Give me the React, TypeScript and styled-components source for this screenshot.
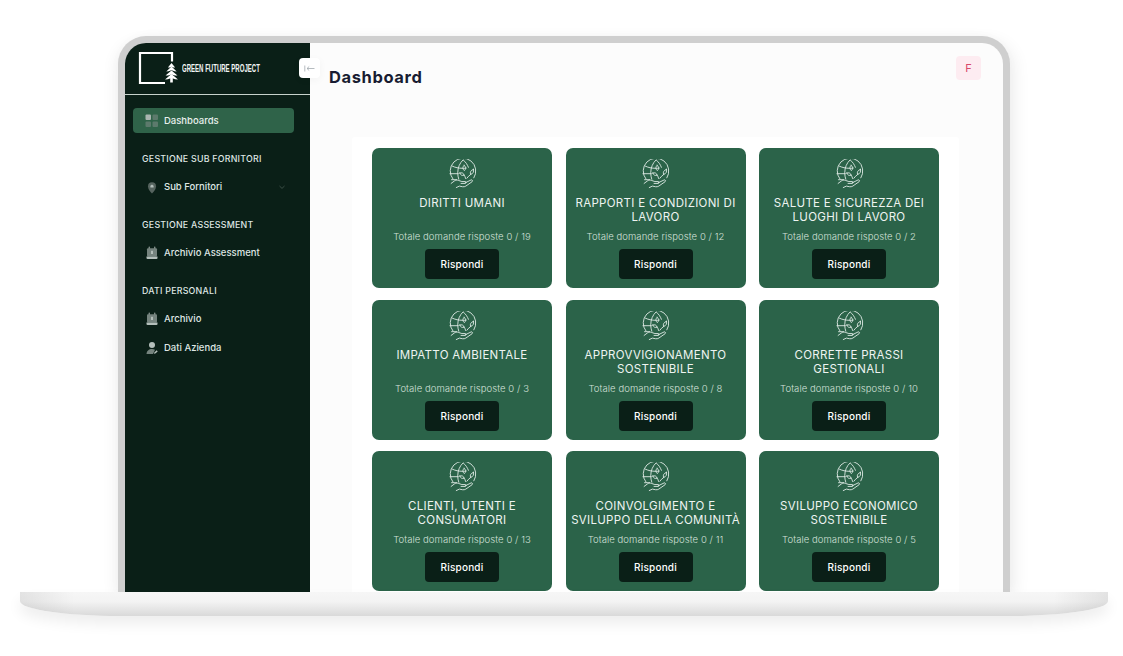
import React from 'react'
import styled, { createGlobalStyle } from 'styled-components'

const GlobalStyle = createGlobalStyle`
  html, body {
    margin: 0;
    padding: 0;
    background: #fff;
    font-family: Inter, "Open Sans", "Liberation Sans", sans-serif;
  }
  * { box-sizing: border-box; }
`

const topics = [
  { title: 'DIRITTI UMANI', total: 19 },
  { title: 'RAPPORTI E CONDIZIONI DI LAVORO', total: 12 },
  { title: 'SALUTE E SICUREZZA DEI LUOGHI DI LAVORO', total: 2 },
  { title: 'IMPATTO AMBIENTALE', total: 3 },
  { title: 'APPROVVIGIONAMENTO SOSTENIBILE', total: 8 },
  { title: 'CORRETTE PRASSI GESTIONALI', total: 10 },
  { title: 'CLIENTI, UTENTI E CONSUMATORI', total: 13 },
  { title: 'COINVOLGIMENTO E SVILUPPO DELLA COMUNITÀ', total: 11 },
  { title: 'SVILUPPO ECONOMICO SOSTENIBILE', total: 5 },
]

const Logo = () => (
  <svg width="42" height="34" viewBox="0 0 42 34" fill="none">
    <path d="M27 32H2V2h32v8.500" stroke="#fff" strokeWidth="2.200" />
    <g fill="#fff">
      <path d="M33.500 12l3.600 4.600-1.500-.2-2.100-.6-2.100.6-1.500.2z" />
      <path d="M33.500 15.400l5.200 5-2-.1-3.200-1-3.200 1-2 .1z" />
      <path d="M33.500 19.400l6 5.200-2.400-.1-3.600-1.100-3.600 1.100-2.400.1z" />
      <path d="M33.500 23l6.500 5.400-2.800-.1-3.700-1.200-3.700 1.200-2.800.1z" />
      <rect x="32.200" y="25" width="2.600" height="6.500" />
    </g>
  </svg>
)

const GridIcon = () => (
  <svg width="14" height="14" viewBox="0 0 14 14">
    <rect x="0.500" y="0.500" width="5.500" height="5.500" rx="1" fill="#a8b5b0" />
    <rect x="7.500" y="0.500" width="5.500" height="5.500" rx="1" fill="#5c7a6c" />
    <rect x="0.500" y="7.500" width="5.500" height="5.500" rx="1" fill="#5c7a6c" />
    <rect x="7.500" y="7.500" width="5.500" height="5.500" rx="1" fill="#5c7a6c" />
  </svg>
)

const PinIcon = () => (
  <svg width="14" height="14" viewBox="0 0 14 14">
    <path d="M7 13.500C4.600 11.200 3 9 3 6.200a4 4 0 018 0c0 2.800-1.600 5-4 7.300z" fill="#56645f" />
    <path d="M5.400 7.400V5.800L7 4.600l1.600 1.200v1.600z" fill="#b4bfbb" />
  </svg>
)

const ArchiveIcon = () => (
  <svg width="14" height="14" viewBox="0 0 14 14">
    <rect x="3.600" y="0.500" width="1.300" height="3" rx="0.500" fill="#8b9894" />
    <rect x="9.100" y="0.500" width="1.300" height="3" rx="0.500" fill="#8b9894" />
    <rect x="2" y="2.200" width="10" height="8.200" rx="1" fill="#75837e" />
    <rect x="6.200" y="4.800" width="1.600" height="3.200" fill="#c2ccc8" />
    <path d="M1.500 10.400h11v1.600a1 1 0 01-1 1h-9a1 1 0 01-1-1z" fill="#b4bfbb" />
  </svg>
)

const UserIcon = () => (
  <svg width="14" height="14" viewBox="0 0 14 14">
    <circle cx="7" cy="4" r="3" fill="#b4bfbb" />
    <path d="M1.500 13c0-3 2.400-5 5.500-5 1.100 0 2.100.2 3 .7L8 13z" fill="#75837e" />
    <path d="M9 12.800l.3-1.400 2.400-2.100 1 1.100-2.400 2.100z" fill="#b4bfbb" />
  </svg>
)

const Chevron = () => (
  <svg width="8" height="8" viewBox="0 0 8 8" fill="none">
    <path d="M1.500 3l2.500 2.400L6.500 3" stroke="#41544c" strokeWidth="0.900" />
  </svg>
)

const BackArrow = () => (
  <svg width="11" height="9" viewBox="0 0 11 9" fill="none" stroke="#a3abb0" strokeWidth="0.800">
    <path d="M0.800 1.500v6" />
    <path d="M10.500 4.500H3M5.200 2.500L3 4.500l2.200 2" />
  </svg>
)

const GlobeHand = () => (
  <svg width="29" height="30" viewBox="0 0 28 29" fill="none" stroke="#e3ede8" strokeWidth="0.850" strokeLinecap="round" strokeLinejoin="round">
    <path d="M4.800 19.400A12.400 12.400 0 1 1 25 18.200" />
    <path d="M14.400 1c-3 2.800-5 7.200-5 12.400 0 2.200.4 4.300 1 6.200" />
    <path d="M14.800 1c2.200 1.900 3.900 4.300 4.900 7" />
    <path d="M4 6.800c2.800 1.500 6.400 2.200 10.400 2.200 1.200 0 2.200 0 3.200-.2" />
    <path d="M1.900 14.200h8" />
    <path d="M3.400 20h5" />
    <path d="M15.600 6.200c1.800 1.400 2 3.200.2 5-1.800-1.600-2-3.400-.2-5z" />
    <path d="M11.400 13.600c2-.8 3.600 0 4.200 2-2 .8-3.600 0-4.200-2z" />
    <path d="M24.600 10c.6 2.400-.4 4.200-2.800 5-.8-2.400.4-4.200 2.800-5z" />
    <path d="M15.600 15.600c.8 1.200 1.200 2 1.400 3.200M21.800 15c-1.400 1-2.600 2.200-3.600 3.600" />
    <path d="M3 23.600l3.200-2.400c1.400-1 2.800-1 4.200-.4l3 1h3.200c1.200 0 1.200 1.800 0 1.800h-4" />
    <path d="M16.600 23l5.800-2.800c1.200-.4 1.800 1 .8 1.800l-6 4.200c-1 .6-2 .8-3.200.6l-3-.6-3 1.400" />
  </svg>
)

const App: React.FC = () => {
  return (
    <Page>
      <GlobalStyle />
      <Lid>
        <Screen>
          <Sidebar>
            <Brand>
              <Logo />
              <BrandName>GREEN FUTURE PROJECT</BrandName>
            </Brand>
            <Nav>
              <ActiveItem>
                <GridIcon />
                <span>Dashboards</span>
              </ActiveItem>
              <SectionLabel>GESTIONE SUB FORNITORI</SectionLabel>
              <NavItem>
                <PinIcon />
                <span>Sub Fornitori</span>
                <ChevronSlot><Chevron /></ChevronSlot>
              </NavItem>
              <SectionLabel>GESTIONE ASSESSMENT</SectionLabel>
              <NavItem>
                <ArchiveIcon />
                <span>Archivio Assessment</span>
              </NavItem>
              <SectionLabel>DATI PERSONALI</SectionLabel>
              <NavItem>
                <ArchiveIcon />
                <span>Archivio</span>
              </NavItem>
              <NavItem>
                <UserIcon />
                <span>Dati Azienda</span>
              </NavItem>
            </Nav>
            <Toggle><BackArrow /></Toggle>
          </Sidebar>
          <Main>
            <Header>
              <Title>Dashboard</Title>
              <Avatar>F</Avatar>
            </Header>
            <Panel>
              <CardGrid>
                {topics.map((t) => (
                  <Card key={t.title}>
                    <GlobeHand />
                    <CardTitle>{t.title}</CardTitle>
                    <CardTotal>Totale domande risposte 0 / {t.total}</CardTotal>
                    <AnswerButton>Rispondi</AnswerButton>
                  </Card>
                ))}
              </CardGrid>
            </Panel>
          </Main>
        </Screen>
      </Lid>
      <Base />
    </Page>
  )
}

export default App

const Page = styled.div`
  width: 1123px;
  height: 656px;
  overflow: hidden;
  display: flex;
  flex-direction: column;
  align-items: center;
  padding-top: 36px;
`
const Lid = styled.div`
  width: 892px;
  height: 556px;
  margin-left: 5px;
  padding: 7px 7px 0;
  flex: none;
  background: #cfcfcf;
  border-radius: 28px 28px 0 0;
  box-shadow: 6px 4px 16px rgba(0, 0, 0, 0.06), -4px 4px 14px rgba(0, 0, 0, 0.05);
`
const Screen = styled.div`
  display: flex;
  height: 100%;
  overflow: hidden;
  border-radius: 21px 21px 0 0;
  background: #fcfcfc;
  font-family: Inter, "Open Sans", sans-serif;
`
const Sidebar = styled.aside`
  position: relative;
  width: 185px;
  flex: none;
  background: #0a1f17;
  color: #e6ecea;
`
const Brand = styled.div`
  height: 52px;
  padding: 8px 0 0 13px;
  display: flex;
  align-items: flex-start;
  gap: 2px;
  border-bottom: 1px solid #c7d2cc;
  svg {
    flex: none;
  }
`
const BrandName = styled.span`
  font-family: "Liberation Sans", sans-serif;
  font-weight: 700;
  font-size: 10.5px;
  line-height: 12px;
  margin-top: 11px;
  color: #f2f5f4;
  white-space: nowrap;
  transform: scaleX(0.575);
  transform-origin: left center;
`
const Nav = styled.nav`
  padding: 13px 16px 0 8px;
  display: flex;
  flex-direction: column;
`
const NavItem = styled.div`
  height: 25px;
  margin-bottom: 4px;
  padding: 0 8px 0 12px;
  display: flex;
  align-items: center;
  gap: 5px;
  font-size: 9.5px;
  font-weight: 500;
  color: #dfe6e3;
  white-space: nowrap;
`
const ActiveItem = styled(NavItem)`
  background: #2f6349;
  border-radius: 4px;
  color: #e8f0ec;
`
const ChevronSlot = styled.span`
  margin-left: auto;
  display: flex;
`
const SectionLabel = styled.div`
  margin-top: 15px;
  padding-left: 9px;
  height: 13px;
  line-height: 13px;
  margin-bottom: 9px;
  font-size: 8.8px;
  letter-spacing: 0.25px;
  font-weight: 500;
  color: #dfe6e3;
  white-space: nowrap;
`
const Toggle = styled.button`
  position: absolute;
  top: 15px;
  left: 174px;
  width: 21px;
  height: 20px;
  padding: 0;
  border: 0;
  border-radius: 4px;
  background: #fff;
  display: flex;
  align-items: center;
  justify-content: center;
  box-shadow: 0 2px 8px rgba(0, 0, 0, 0.04);
`
const Main = styled.main`
  flex: 1;
  min-width: 0;
  display: flex;
  flex-direction: column;
`
const Header = styled.header`
  height: 94px;
  flex: none;
  padding: 13px 22px 0 19px;
  display: flex;
  align-items: flex-start;
  justify-content: space-between;
`
const Title = styled.h1`
  margin: 11px 0 0;
  font-size: 16.5px;
  letter-spacing: 0.6px;
  line-height: 20px;
  font-weight: 700;
  color: #181c32;
`
const Avatar = styled.div`
  width: 25px;
  height: 24px;
  border-radius: 4px;
  background: #fdecf1;
  color: #d9486a;
  font-size: 11px;
  display: flex;
  align-items: center;
  justify-content: center;
`
const Panel = styled.section`
  width: 607px;
  flex: 1;
  margin-left: 42px;
  padding: 11px 20px 0;
  background: #fff;
  border-radius: 3px 3px 0 0;
`
const CardGrid = styled.div`
  display: grid;
  grid-template-columns: repeat(3, 180px);
  grid-auto-rows: 140px;
  column-gap: 13.5px;
  row-gap: 11.5px;
`
const Card = styled.article`
  padding: 11px 0 9px;
  background: #2b6349;
  border-radius: 7px;
  display: flex;
  flex-direction: column;
  align-items: center;
  color: #eef4f1;
`
const CardTitle = styled.h3`
  margin: 7px 0 0;
  height: 28px;
  width: 100%;
  padding: 0 1px;
  text-align: center;
  font-size: 11.5px;
  letter-spacing: 0.3px;
  line-height: 14px;
  font-weight: 400;
  color: #eef4f1;
`
const CardTotal = styled.p`
  margin: 6px 0 0;
  font-size: 9.5px;
  letter-spacing: 0.07px;
  line-height: 14px;
  font-weight: 300;
  color: #d3e0d9;
  white-space: nowrap;
`
const AnswerButton = styled.button`
  margin-top: 5px;
  width: 74px;
  height: 30px;
  flex: none;
  border: 0;
  border-radius: 4px;
  background: #0a1f17;
  color: #fff;
  font-family: inherit;
  font-size: 10px;
  letter-spacing: 0.2px;
  font-weight: 500;
`
const Base = styled.div`
  width: 1088px;
  height: 24px;
  flex: none;
  margin-left: 5px;
  background:
    linear-gradient(90deg, rgba(0, 0, 0, 0.08), rgba(0, 0, 0, 0) 5%, rgba(0, 0, 0, 0) 95%, rgba(0, 0, 0, 0.08)),
    linear-gradient(180deg, #f6f6f6 0%, #f3f3f3 40%, #d9d9d9 100%);
  border-radius: 0 0 100px 100px / 0 0 15px 15px;
  box-shadow: 0 8px 14px rgba(0, 0, 0, 0.07);
`
